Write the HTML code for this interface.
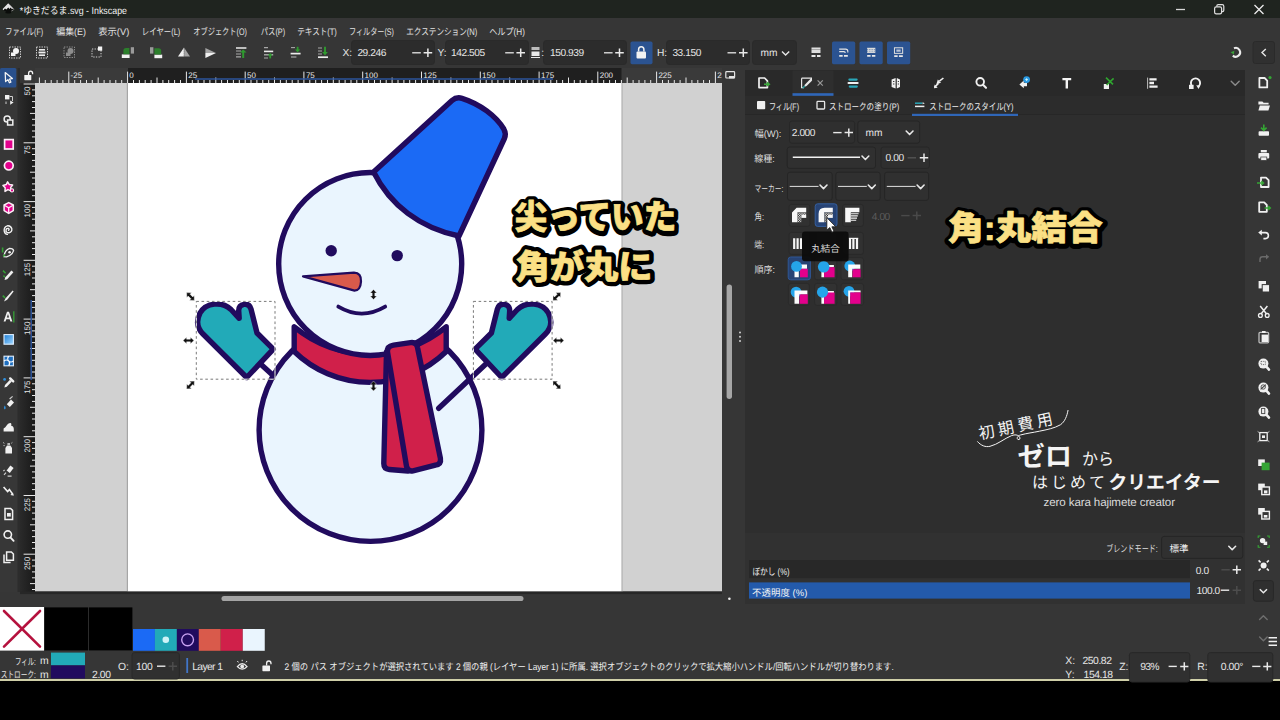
<!DOCTYPE html>
<html lang="ja"><head><meta charset="utf-8"><title>*ゆきだるま.svg - Inkscape</title>
<style>
*{box-sizing:border-box;margin:0;padding:0}
html,body{width:1280px;height:720px;overflow:hidden;background:#000}
body{text-rendering:geometricPrecision;-webkit-font-smoothing:antialiased;font-family:"Liberation Sans",sans-serif;color:#e4e4e4;font-size:10px}
#app{position:relative;width:1280px;height:720px;overflow:hidden;background:#363636}
.ov{position:absolute;left:0;top:0;pointer-events:none;overflow:hidden}
.a{position:absolute}
.t{position:absolute;z-index:4;white-space:nowrap;line-height:1;color:#e6e6e6}
.fld{position:absolute;background:#2c2c2c;border-radius:3px;box-shadow:0 0 0 1px #2a2a2a}
svg text{font-family:"Liberation Sans","Noto Sans CJK JP",sans-serif;white-space:pre}

</style></head>
<body>
<div id="app">
<div class="a" style="left:0;top:0;width:1280px;height:17.5px;background:#1f241f"></div>
<div class="a" style="left:745px;top:70px;width:500px;height:534px;background:#2e2e2e"></div>
<div class="a" style="left:745px;top:70px;width:500px;height:26px;background:#292929"></div>
<div class="a" style="left:745px;top:533px;width:500px;height:71px;background:#313131"></div>
<div class="a" style="left:745px;top:96px;width:500px;height:19px;background:#2c2c2c;border-bottom:1px solid #272727"></div>
<div class="a" style="left:0;top:680px;width:1280px;height:40px;background:#000"></div>
<div class="a" style="left:0;top:679.4px;width:1280px;height:1.8px;background:#cfcfa8"></div>
<svg class="ov" style="z-index:1" width="1280" height="720" viewBox="0 0 1280 720" ><rect x="35" y="83" width="687" height="508.5" fill="#d1d1d1"/><rect x="621" y="83" width="2" height="508.5" fill="#bdbdbd"/><rect x="126.8" y="83" width="1.3" height="508.5" fill="#a6a6a6"/><rect x="128" y="83" width="493.3" height="508.5" fill="#ffffff"/><clipPath id="cv"><rect x="35" y="83" width="687" height="508.5"/></clipPath><g clip-path="url(#cv)"><path d="M260 363.5L300 400" stroke="#210b5e" stroke-width="5.4" stroke-linejoin="round" stroke-linecap="round" fill="none"/><circle cx="370.5" cy="430" r="111.4" fill="#eaf5fe" stroke="#210b5e" stroke-width="5.4" stroke-linejoin="round" stroke-linecap="round"/><path d="M294.2 326.8L294.2 351.5A109 109 0 0 0 446.2 351.5L446.2 326.8A120.2 120.2 0 0 1 294.2 326.8Z" fill="#d0204a" stroke="#210b5e" stroke-width="5.4" stroke-linejoin="round" stroke-linecap="round"/><circle cx="370.2" cy="264" r="91.5" fill="#eaf5fe" stroke="#210b5e" stroke-width="5.4" stroke-linejoin="round" stroke-linecap="round"/><path d="M373.6 172L452 100.5Q456.5 96.6 462 98.3C480 104 496 116 503.8 129Q506.4 133.6 504.4 138.5L459 236C420 228 390 205 373.6 172Z" fill="#1b6af5" stroke="#210b5e" stroke-width="5.4" stroke-linejoin="round" stroke-linecap="round"/><circle cx="331.2" cy="250.8" r="5.7" fill="#210b5e"/><circle cx="397.2" cy="255.6" r="5.7" fill="#210b5e"/><path d="M303 276.4L354 272.6Q361.5 273 361 281.5Q360.5 290.5 354.5 290.6Z" fill="#d95a4b" stroke="#210b5e" stroke-width="2.2" stroke-linejoin="round"/><path d="M338.3 306.6Q361.7 320.5 385.2 306.6" fill="none" stroke="#210b5e" stroke-width="3.8" stroke-linecap="round"/><path d="M386.5 352L383.8 463.5Q383.8 469 389.3 469.5L408 471L404 352Z" fill="#d0204a" stroke="#210b5e" stroke-width="5.4" stroke-linejoin="round" stroke-linecap="round"/><path d="M393.5 345.2L410.5 342.6Q416.5 341.8 417.5 347.5L440.4 458.2Q441.4 464.2 435.4 465.2L413 470.8Q407.5 471.8 406.5 466.3L387.5 352Q386.8 346.3 393.5 345.2Z" fill="#d0204a" stroke="#210b5e" stroke-width="5.4" stroke-linejoin="round" stroke-linecap="round"/><path d="M438.7 408.3L488 362" stroke="#210b5e" stroke-width="5.4" stroke-linejoin="round" stroke-linecap="round" fill="none"/><path d="M246.7 377.5L273.3 349.2L257 333L251 309Q249.5 303.5 244 304.4Q238.8 305.2 238.7 310.5L239.2 318.3L231 309.5C222 301 206 302.5 200 313C196 321 197 328 203 334Z" fill="#22aab8" stroke="#210b5e" stroke-width="5.4" stroke-linejoin="round" stroke-linecap="round"/><g transform="translate(748.4 0) scale(-1 1)"><path d="M246.7 377.5L273.3 349.2L257 333L251 309Q249.5 303.5 244 304.4Q238.8 305.2 238.7 310.5L239.2 318.3L231 309.5C222 301 206 302.5 200 313C196 321 197 328 203 334Z" fill="#22aab8" stroke="#210b5e" stroke-width="5.4" stroke-linejoin="round" stroke-linecap="round"/></g><rect x="196.3" y="301.4" width="78.7" height="77.8" fill="none" stroke="#ffffff" stroke-width="1"/><rect x="196.3" y="301.4" width="78.7" height="77.8" fill="none" stroke="#6a6a6a" stroke-width="0.9" stroke-dasharray="2.6 2.6"/><rect x="473.4" y="301.4" width="78.7" height="77.8" fill="none" stroke="#ffffff" stroke-width="1"/><rect x="473.4" y="301.4" width="78.7" height="77.8" fill="none" stroke="#6a6a6a" stroke-width="0.9" stroke-dasharray="2.6 2.6"/><g transform="translate(190.5 296.5) rotate(45)"><path d="M-5.5 0L-1.9 -3.3V-1.3H1.9V-3.3L5.5 0L1.9 3.3V1.3H-1.9V3.3Z" fill="#111" stroke="#fff" stroke-width="0.4"/></g><g transform="translate(556.8 296.5) rotate(-45)"><path d="M-5.5 0L-1.9 -3.3V-1.3H1.9V-3.3L5.5 0L1.9 3.3V1.3H-1.9V3.3Z" fill="#111" stroke="#fff" stroke-width="0.4"/></g><g transform="translate(190.5 385) rotate(-45)"><path d="M-5.5 0L-1.9 -3.3V-1.3H1.9V-3.3L5.5 0L1.9 3.3V1.3H-1.9V3.3Z" fill="#111" stroke="#fff" stroke-width="0.4"/></g><g transform="translate(556.8 385) rotate(45)"><path d="M-5.5 0L-1.9 -3.3V-1.3H1.9V-3.3L5.5 0L1.9 3.3V1.3H-1.9V3.3Z" fill="#111" stroke="#fff" stroke-width="0.4"/></g><g transform="translate(188.5 340.5) rotate(0)"><path d="M-5.5 0L-1.9 -3.3V-1.3H1.9V-3.3L5.5 0L1.9 3.3V1.3H-1.9V3.3Z" fill="#111" stroke="#fff" stroke-width="0.4"/></g><g transform="translate(558.5 340.5) rotate(0)"><path d="M-5.5 0L-1.9 -3.3V-1.3H1.9V-3.3L5.5 0L1.9 3.3V1.3H-1.9V3.3Z" fill="#111" stroke="#fff" stroke-width="0.4"/></g><g transform="translate(373.5 294.5) rotate(90)"><path d="M-5.0 0L-1.4 -3.3V-1.3H1.4V-3.3L5.0 0L1.4 3.3V1.3H-1.4V3.3Z" fill="#111" stroke="#fff" stroke-width="0.4"/></g><g transform="translate(373.5 386) rotate(90)"><path d="M-5.0 0L-1.4 -3.3V-1.3H1.4V-3.3L5.0 0L1.4 3.3V1.3H-1.4V3.3Z" fill="#111" stroke="#fff" stroke-width="0.4"/></g></g><rect x="20" y="68" width="702" height="15" fill="#3a3a3a"/><rect x="128" y="68" width="493.5" height="15" fill="#1f1f1f"/><path d="M39.4 77.5V83M45.3 80V83M51.2 80V83M57.1 80V83M62.9 80V83M68.8 71.6V83M74.7 80V83M80.6 80V83M86.5 80V83M92.3 80V83M98.2 77.5V83M104.1 80V83M110.0 80V83M115.8 80V83M121.7 80V83M127.6 71.6V83M133.5 80V83M139.4 80V83M145.2 80V83M151.1 80V83M157.0 77.5V83M162.9 80V83M168.7 80V83M174.6 80V83M180.5 80V83M186.4 71.6V83M192.3 80V83M198.1 80V83M204.0 80V83M209.9 80V83M215.8 77.5V83M221.6 80V83M227.5 80V83M233.4 80V83M239.3 80V83M245.2 71.6V83M251.0 80V83M256.9 80V83M262.8 80V83M268.7 80V83M274.5 77.5V83M280.4 80V83M286.3 80V83M292.2 80V83M298.1 80V83M303.9 71.6V83M309.8 80V83M315.7 80V83M321.6 80V83M327.5 80V83M333.3 77.5V83M339.2 80V83M345.1 80V83M351.0 80V83M356.8 80V83M362.7 71.6V83M368.6 80V83M374.5 80V83M380.4 80V83M386.2 80V83M392.1 77.5V83M398.0 80V83M403.9 80V83M409.7 80V83M415.6 80V83M421.5 71.6V83M427.4 80V83M433.3 80V83M439.1 80V83M445.0 80V83M450.9 77.5V83M456.8 80V83M462.6 80V83M468.5 80V83M474.4 80V83M480.3 71.6V83M486.2 80V83M492.0 80V83M497.9 80V83M503.8 80V83M509.7 77.5V83M515.5 80V83M521.4 80V83M527.3 80V83M533.2 80V83M539.1 71.6V83M544.9 80V83M550.8 80V83M556.7 80V83M562.6 80V83M568.5 77.5V83M574.3 80V83M580.2 80V83M586.1 80V83M592.0 80V83M597.8 71.6V83M603.7 80V83M609.6 80V83M615.5 80V83M621.4 80V83M627.2 77.5V83M633.1 80V83M639.0 80V83M644.9 80V83M650.7 80V83M656.6 71.6V83M662.5 80V83M668.4 80V83M674.3 80V83M680.1 80V83M686.0 77.5V83M691.9 80V83M697.8 80V83M703.6 80V83M709.5 80V83M715.4 71.6V83" stroke="#e8e8e8" stroke-width="1" fill="none"/><path d="M195 79H553" stroke="#2c549c" stroke-width="1.5" fill="none"/><defs><linearGradient id="rv" x1="0" x2="1" y1="0" y2="0"><stop offset="0" stop-color="#2a2a2a"/><stop offset="1" stop-color="#191919"/></linearGradient></defs><rect x="20" y="83" width="15" height="509" fill="url(#rv)"/><path d="M23.6 84.0H35M32 89.9H35M32 95.8H35M32 101.6H35M32 107.5H35M30 113.4H35M32 119.3H35M32 125.1H35M32 131.0H35M32 136.9H35M23.6 142.8H35M32 148.7H35M32 154.5H35M32 160.4H35M32 166.3H35M30 172.2H35M32 178.0H35M32 183.9H35M32 189.8H35M32 195.7H35M23.6 201.6H35M32 207.4H35M32 213.3H35M32 219.2H35M32 225.1H35M30 230.9H35M32 236.8H35M32 242.7H35M32 248.6H35M32 254.5H35M23.6 260.3H35M32 266.2H35M32 272.1H35M32 278.0H35M32 283.9H35M30 289.7H35M32 295.6H35M32 301.5H35M32 307.4H35M32 313.2H35M23.6 319.1H35M32 325.0H35M32 330.9H35M32 336.8H35M32 342.6H35M30 348.5H35M32 354.4H35M32 360.3H35M32 366.1H35M32 372.0H35M23.6 377.9H35M32 383.8H35M32 389.7H35M32 395.5H35M32 401.4H35M30 407.3H35M32 413.2H35M32 419.0H35M32 424.9H35M32 430.8H35M23.6 436.7H35M32 442.6H35M32 448.4H35M32 454.3H35M32 460.2H35M30 466.1H35M32 471.9H35M32 477.8H35M32 483.7H35M32 489.6H35M23.6 495.5H35M32 501.3H35M32 507.2H35M32 513.1H35M32 519.0H35M30 524.8H35M32 530.7H35M32 536.6H35M32 542.5H35M32 548.4H35M23.6 554.2H35M32 560.1H35M32 566.0H35M32 571.9H35M32 577.8H35M30 583.6H35M32 589.5H35" stroke="#e8e8e8" stroke-width="1" fill="none"/><path d="M31.2 300V380" stroke="#2c549c" stroke-width="1.5" fill="none"/></svg>
<div class="fld" style="left:352px;top:41px;width:82px;height:23px"></div>
<div class="fld" style="left:445.5px;top:41px;width:82px;height:23px"></div>
<div class="fld" style="left:543.5px;top:41px;width:82.5px;height:23px"></div>
<div class="fld" style="left:667px;top:41px;width:82px;height:23px"></div>
<div class="fld" style="left:752.5px;top:41px;width:43.5px;height:23px"></div>
<span class="t" style="left:342.5px;top:48.9px;font-size:10.2px;color:#e6e6e6;letter-spacing:0px;">X:</span>
<span class="t" style="left:357.4px;top:48.9px;font-size:10.2px;color:#e6e6e6;letter-spacing:-0.45px;">29.246</span>
<span class="t" style="left:437.5px;top:48.9px;font-size:10.2px;color:#e6e6e6;letter-spacing:0px;">Y:</span>
<span class="t" style="left:451px;top:48.9px;font-size:10.2px;color:#e6e6e6;letter-spacing:-0.45px;">142.505</span>
<span class="t" style="left:541.2px;top:48.9px;font-size:10.2px;color:#e6e6e6;letter-spacing:0px;">:</span>
<span class="t" style="left:550px;top:48.9px;font-size:10.2px;color:#e6e6e6;letter-spacing:-0.45px;">150.939</span>
<span class="t" style="left:657px;top:48.9px;font-size:10.2px;color:#e6e6e6;letter-spacing:0px;">H:</span>
<span class="t" style="left:672.4px;top:48.9px;font-size:10.2px;color:#e6e6e6;letter-spacing:-0.45px;">33.150</span>
<span class="t" style="left:760.6px;top:48.9px;font-size:10.2px;color:#e6e6e6;letter-spacing:-0.2px;">mm</span><svg class="ov" style="z-index:3" width="1280" height="720" viewBox="0 0 1280 720" ><path d="M8.2 3.2L2.8 8.8Q2.2 9.8 3.6 10.4L5.4 11Q6.4 11.5 5.5 12.2Q4.8 13 6.2 13.3Q8.2 13.8 10.4 13.3Q11.8 13 11 12.2Q10.2 11.5 11.2 11L13 10.4Q14.2 9.8 13.6 8.8Z" fill="#0b0d0b"/><path d="M8.2 3.2L2.8 8.8Q2.4 9.6 3.4 10.2L5 8.4L6.4 9.4L8.2 7.6L9.6 9L10.6 7.6L12 9.2L13.2 8.4Z" fill="#e4e4e4"/><path d="M9.4 4.4L13.6 8.8Q14 9.6 13.2 10.2L11.4 10.9" fill="none" stroke="#8a8a8a" stroke-width="0.9"/><text x="19.7" y="14.1" font-size="10" fill="#f2f2f2" textLength="107.3" lengthAdjust="spacingAndGlyphs">*ゆきだるま.svg - Inkscape</text><path d="M1176 9.5H1185" stroke="#d8d8d8" stroke-width="1.3"/><rect x="1214.6" y="6.8" width="7" height="7" rx="1.6" fill="none" stroke="#e0e0e0" stroke-width="1.2"/><path d="M1216.8 6.6V6Q1216.8 4.6 1218.2 4.6H1222.2Q1223.8 4.6 1223.8 6.2V10.2Q1223.8 11.6 1222.4 11.6H1221.8" fill="none" stroke="#e0e0e0" stroke-width="1.2"/><path d="M1254.5 5L1263.5 14M1263.5 5L1254.5 14" stroke="#ececec" stroke-width="1.3"/><text x="5.2" y="34.7" font-size="9.5" fill="#e2e2e2" textLength="38" lengthAdjust="spacingAndGlyphs">ファイル(F)</text><text x="56.2" y="34.7" font-size="9.5" fill="#e2e2e2" textLength="29.8" lengthAdjust="spacingAndGlyphs">編集(E)</text><text x="98.2" y="34.7" font-size="9.5" fill="#e2e2e2" textLength="31.1" lengthAdjust="spacingAndGlyphs">表示(V)</text><text x="141.8" y="34.7" font-size="9.5" fill="#e2e2e2" textLength="38.5" lengthAdjust="spacingAndGlyphs">レイヤー(L)</text><text x="193.3" y="34.7" font-size="9.5" fill="#e2e2e2" textLength="53.6" lengthAdjust="spacingAndGlyphs">オブジェクト(O)</text><text x="260.7" y="34.7" font-size="9.5" fill="#e2e2e2" textLength="24.5" lengthAdjust="spacingAndGlyphs">パス(P)</text><text x="297.3" y="34.7" font-size="9.5" fill="#e2e2e2" textLength="39.6" lengthAdjust="spacingAndGlyphs">テキスト(T)</text><text x="348.9" y="34.7" font-size="9.5" fill="#e2e2e2" textLength="45.1" lengthAdjust="spacingAndGlyphs">フィルター(S)</text><text x="406.2" y="34.7" font-size="9.5" fill="#e2e2e2" textLength="71.2" lengthAdjust="spacingAndGlyphs">エクステンション(N)</text><text x="489.2" y="34.7" font-size="9.5" fill="#e2e2e2" textLength="35.7" lengthAdjust="spacingAndGlyphs">ヘルプ(H)</text><rect x="9.5" y="47" width="11" height="11" fill="none" stroke="#d0d0d0" stroke-width="1" stroke-dasharray="1.4 1.1" opacity="1.0"/><circle cx="16" cy="51" r="3" fill="#f4f4f4"/><rect x="11" y="52.5" width="4.5" height="3.5" fill="#f4f4f4"/><rect x="36.5" y="47" width="11" height="11" fill="none" stroke="#d0d0d0" stroke-width="1" stroke-dasharray="1.4 1.1" opacity="1.0"/><rect x="39" y="49" width="6" height="1.6" fill="#eee"/><rect x="38.5" y="51.6" width="7" height="1.8" fill="#eee"/><rect x="39" y="54.4" width="6" height="1.6" fill="#eee"/><rect x="64" y="47" width="10.5" height="10.5" fill="none" stroke="#d0d0d0" stroke-width="1" stroke-dasharray="1.4 1.1" opacity="0.55"/><circle cx="70.5" cy="51" r="3" fill="#8d8d8d"/><rect x="66" y="52.5" width="4.5" height="3.5" fill="#8d8d8d"/><rect x="92" y="49" width="9" height="8" fill="none" stroke="#cfcfcf" stroke-width="1" stroke-dasharray="1.3 1.3"/><rect x="98" y="46.5" width="4.2" height="4.2" fill="#f4f4f4"/><rect x="121.8" y="54.4" width="7.8" height="3.6" fill="#f2f2f2"/><rect x="130.8" y="47.2" width="3.2" height="6.4" fill="#9a9a9a"/><path d="M123.4 54.2V50.6Q123.4 48 126 48H129.4V54.2Z" fill="#2c7f2c"/><rect x="154.4" y="54.6" width="7.8" height="3.6" fill="#f2f2f2"/><rect x="150" y="47.2" width="3.4" height="6.4" fill="#9a9a9a"/><path d="M161.2 54.4V50.8Q161.2 48.2 158.6 48.2H154.4V54.4Z" fill="#2c7f2c"/><path d="M184 47.4V56.6H178Z" fill="#f0f0f0"/><path d="M184 47.4V56.6H190Z" fill="#a4a4a4"/><path d="M184 47.4V56.6" stroke="#444" stroke-width="0.7" stroke-dasharray="1 1"/><path d="M205.4 53H216L205.4 48Z" fill="#a4a4a4"/><path d="M205.4 53H216L205.4 58Z" fill="#f0f0f0"/><path d="M236 48H246.4" stroke="#ececec" stroke-width="1.5"/><path d="M236 51H241M236 54H241M236 56.8H241" stroke="#a8a8a8" stroke-width="1.2"/><path d="M243.2 58V51.6" stroke="#2f9a2f" stroke-width="2"/><path d="M239.8 52.6L243.2 49.4L246.6 52.6Z" fill="#2f9a2f"/><path d="M264 47.6H268M264 58H268" stroke="#a8a8a8" stroke-width="1.1"/><path d="M264 51.4H273.2" stroke="#ececec" stroke-width="1.6"/><path d="M264 54.8H273.2" stroke="#b4b4b4" stroke-width="1.3"/><path d="M270.2 58.4V55" stroke="#2f9a2f" stroke-width="1.8"/><path d="M267.8 55.6L270.2 53L272.6 55.6Z" fill="#2f9a2f"/><path d="M290.6 53.6H300.6" stroke="#ececec" stroke-width="1.7"/><path d="M291 57H296.4" stroke="#a8a8a8" stroke-width="1.2"/><path d="M291 47.6H295" stroke="#a8a8a8" stroke-width="1.1"/><path d="M297.6 46.8V50" stroke="#2f9a2f" stroke-width="1.8"/><path d="M295 49.6L297.6 52.4L300.2 49.6Z" fill="#2f9a2f"/><path d="M318 57.2H328" stroke="#ececec" stroke-width="1.7"/><path d="M318 48H322M318 51H322M318 54H322" stroke="#a8a8a8" stroke-width="1.1"/><path d="M325 46.8V52.6" stroke="#2f9a2f" stroke-width="1.9"/><path d="M322.2 52L325 55.4L327.8 52Z" fill="#2f9a2f"/><rect x="531.5" y="47" width="8" height="3" fill="#bdbdbd"/><rect x="531.5" y="51.5" width="8" height="4.5" fill="#e8e8e8"/><path d="M531 57.5H540" stroke="#e8e8e8" stroke-width="1"/><rect x="630.5" y="41.6" width="22" height="22.6" rx="1.6" fill="#2b5391"/><rect x="636.5" y="51.5" width="9.5" height="7" rx="1" fill="#f2f2f2"/><path d="M638.6 51.5V49.6Q638.6 46.8 641.2 46.8Q643.9 46.8 643.9 49.6V51.5" fill="none" stroke="#f2f2f2" stroke-width="1.5"/><rect x="811.5" y="47.5" width="9" height="5.5" fill="#dedede"/><path d="M811.5 49.5H820.5" stroke="#555" stroke-width="0.8" stroke-dasharray="1 1"/><path d="M811.5 56H815.5M817 56H820.5" stroke="#e8e8e8" stroke-width="2"/><rect x="832" y="41.6" width="23.2" height="22.6" rx="1.6" fill="#2b5391"/><rect x="859.5" y="41.6" width="23.2" height="22.6" rx="1.6" fill="#2b5391"/><rect x="887" y="41.6" width="23.2" height="22.6" rx="1.6" fill="#2b5391"/><g transform="translate(843.6 52.6) scale(0.86) translate(-843.6 -52.6)"><path d="M838.5 48.5H846Q848.5 48.5 848.5 51V52.5M838.5 51.5H844Q845.5 51.5 845.5 53" fill="none" stroke="#e6e6e6" stroke-width="1.3"/><path d="M838.5 56.5H842.5M844 56.5H848.5" stroke="#e8e8e8" stroke-width="2"/></g><g transform="translate(871.2 52.6) scale(0.86) translate(-871.2 -52.6)"><rect x="866.5" y="47" width="9.5" height="6" fill="#dcdcdc"/><path d="M866.5 49H876M866.5 51H876" stroke="#2c5896" stroke-width="0.7" stroke-dasharray="1 1"/><path d="M866.5 56.5H870.5M872 56.5H876" stroke="#e8e8e8" stroke-width="2"/></g><g transform="translate(898.6 52.6) scale(0.86) translate(-898.6 -52.6)"><rect x="893.8" y="47" width="9.5" height="6.5" fill="none" stroke="#dcdcdc" stroke-width="1.2"/><rect x="896" y="49" width="5" height="2.6" fill="#b8c4d8"/><path d="M893.5 56.8H897.5M899 56.8H903.5" stroke="#e8e8e8" stroke-width="2"/></g><path d="M1234 48.2A4.4 4.4 0 1 1 1232.8 55.6" fill="none" stroke="#ececec" stroke-width="2.1"/><path d="M1230.6 52.2L1234.4 50.8L1233.8 54.4Z" fill="#3aa03a"/><rect x="1253" y="41.5" width="21.5" height="22" rx="2.5" fill="#303030" stroke="#2a2a2a" stroke-width="1"/><path d="M1265.8 49L1262 52.6L1265.8 56.2" fill="none" stroke="#e6e6e6" stroke-width="1.4"/><path d="M782 51.4L785.6 55L789.2 51.4" fill="none" stroke="#e6e6e6" stroke-width="1.4"/><path d="M412.2 52.8H420.8" stroke="#e9e9e9" stroke-width="1.3"/><path d="M423.6 52.8H432.20000000000005M427.90000000000003 48.5V57.099999999999994" stroke="#e9e9e9" stroke-width="1.5"/><path d="M505.2 52.8H513.8" stroke="#e9e9e9" stroke-width="1.3"/><path d="M516.4 52.8H525.0M520.6999999999999 48.5V57.099999999999994" stroke="#e9e9e9" stroke-width="1.5"/><path d="M604 52.8H612.6" stroke="#e9e9e9" stroke-width="1.3"/><path d="M615.2 52.8H623.8000000000001M619.5 48.5V57.099999999999994" stroke="#e9e9e9" stroke-width="1.5"/><path d="M727.5 52.8H736.1" stroke="#e9e9e9" stroke-width="1.3"/><path d="M739 52.8H747.6M743.3 48.5V57.099999999999994" stroke="#e9e9e9" stroke-width="1.5"/></svg>
<svg class="ov" style="z-index:2" width="1280" height="720" viewBox="0 0 1280 720" ><rect x="0" y="68" width="17.5" height="524" fill="#373737"/><rect x="17.5" y="68" width="2.5" height="524" fill="#2c2c2c"/><rect x="20" y="68" width="15" height="15" fill="#363636"/><rect x="0" y="68" width="16.3" height="19.5" rx="1.5" fill="#29508c"/><path d="M5.2 72.6L5.6 81.6L7.9 79.6L9.4 82.8L10.9 82.1L9.5 79L12.4 78.6Z" fill="#29508c" stroke="#f4f4f4" stroke-width="1.25" stroke-linejoin="round"/><rect x="24.3" y="75" width="7" height="5.2" rx="0.6" fill="#f4f4f4"/><path d="M28.6 75V73.4Q28.6 71.2 30.6 71.2Q32.6 71.2 32.6 73.4V74.2" fill="none" stroke="#f4f4f4" stroke-width="1.3"/><rect x="5" y="95" width="4.4" height="4.4" fill="#f0f0f0"/><path d="M6 101.5V104M9.5 96.5H12.5V101" stroke="#cfcfcf" stroke-width="1" fill="none"/><path d="M10.2 100.5L13.6 102.6L10.2 104.8Z" fill="#f0f0f0"/><circle cx="7.2" cy="119" r="3.1" fill="none" stroke="#f0f0f0" stroke-width="1.5"/><rect x="7.6" y="120" width="5.2" height="5" fill="#363636" stroke="#f0f0f0" stroke-width="1.5"/><rect x="4.6" y="139.6" width="8.6" height="9.4" fill="#e3008c" stroke="#fbeef6" stroke-width="1.7"/><circle cx="8.8" cy="165.6" r="4.4" fill="#e3008c" stroke="#fbeef6" stroke-width="1.7"/><path d="M7.6 181.8L9.3 184.6L12.6 185L10.6 187.6L11.4 191L7.9 189.6L5 191.4L5.2 187.8L3 185.4L6.2 184.6Z" fill="#e3008c" stroke="#fbeef6" stroke-width="1.5" stroke-linejoin="round"/><circle cx="12" cy="190.4" r="1.6" fill="#e3008c" stroke="#fbeef6" stroke-width="1.1"/><path d="M8.7 202.6L13.3 205V210.6L8.7 213.4L4.1 210.6V205Z" fill="#e3008c" stroke="#fbeef6" stroke-width="1.5" stroke-linejoin="round"/><path d="M4.3 205.2L8.7 207.8L13.1 205.2M8.7 207.8V213" fill="none" stroke="#fbeef6" stroke-width="1.3"/><path d="M8.6 230.2Q9.6 229.2 8.4 228.4Q6.4 228 6 230.2Q6 233 9 232.8Q12.2 232 11.8 228.8Q10.8 225.4 7.4 225.8Q3.8 226.8 4.2 230.8Q4.8 234 7.4 234.4" fill="none" stroke="#f0f0f0" stroke-width="1.4" stroke-linecap="round"/><path d="M4 256.6Q4.6 250 9.6 248.4Q13.4 248.6 13.6 250.6Q12.4 255 6.6 256.8Z" fill="none" stroke="#f0f0f0" stroke-width="1.3"/><circle cx="9.6" cy="252.2" r="1.3" fill="#f0f0f0"/><path d="M2.6 247.6V252.4M3.2 256.4L5 254.6" stroke="#35a035" stroke-width="1.6"/><path d="M5.2 277.6L11.4 270.4L13.4 272.2L7.2 279.2L4.6 280Z" fill="#f0f0f0"/><path d="M3 270.6L5.6 273.2M3.4 275.6L5 277" stroke="#35a035" stroke-width="1.5"/><path d="M5.4 298.6L12.6 290.4L13.6 291.4L7.2 299.8L4 301.6Z" fill="#f0f0f0"/><path d="M2.8 295.6L5.2 298" stroke="#35a035" stroke-width="1.6"/><path d="M3.6 321.6L7 311.8H9L12.4 321.6H10.4L9.6 319.2H6.3L5.5 321.6ZM6.8 317.6H9.1L8 314Z" fill="#f0f0f0"/><path d="M13.8 311.2V322.4" stroke="#35a035" stroke-width="1.3"/><defs><linearGradient id="gg" x1="0" y1="0" x2="1" y2="1"><stop offset="0" stop-color="#1e7fd6"/><stop offset="1" stop-color="#9fd6ff"/></linearGradient></defs><rect x="4" y="334.6" width="9.4" height="9.6" fill="url(#gg)" stroke="#dfefff" stroke-width="1.1"/><rect x="4" y="356.2" width="9.4" height="9.6" fill="#1e6fc0" stroke="#dfefff" stroke-width="1.1"/><path d="M4 361Q6.4 359 8.7 361T13.4 361M8.7 356.2Q6.8 358.6 8.7 361T8.7 365.8" fill="none" stroke="#fff" stroke-width="1.1"/><path d="M4.4 387.4L5 385L10 379.8L11.8 381.6L6.8 386.8Z" fill="#f0f0f0"/><path d="M10.2 378.4L13.2 381.4" stroke="#f0f0f0" stroke-width="2.4" stroke-linecap="round"/><circle cx="4.6" cy="379.4" r="1.4" fill="#2f8fdc"/><path d="M6.8 404.2L11 399.6L14 402.4L9.8 407Z" fill="#f0f0f0"/><path d="M4.8 405.4Q3 408.2 4.8 409.4Q6.6 408.2 4.8 405.4Z" fill="#2f8fdc"/><path d="M9.6 399L12.6 396.4" stroke="#cfcfcf" stroke-width="1.2"/><path d="M3.6 431.6V428.4Q5.6 427.8 6.6 425.6Q8 422.6 10.6 423Q12.2 423.8 11 425.6Q13.8 426.2 13.8 429V431.6Z" fill="#f0f0f0"/><path d="M5.4 453.6V448L7 445.6H10.4L12 448V453.6Z" fill="#f0f0f0"/><rect x="7.4" y="443" width="2.6" height="2" fill="#bdbdbd"/><path d="M3 442.4L4.4 443.4M3.4 445.6H4.8M12.4 442.4L11.2 443.4" stroke="#bdbdbd" stroke-width="0.9"/><path d="M6.6 470.6L10.4 465.6L13.6 468L9.8 473Z" fill="#f0f0f0"/><path d="M4 474.8L6 472.6M7.6 476.2H11.6M3.4 471L4.6 470" stroke="#cfcfcf" stroke-width="1.2"/><path d="M3.6 487L7.6 491.6L9.4 489.6L13 494.6" fill="none" stroke="#f0f0f0" stroke-width="1.6"/><path d="M13.8 495.8L10.4 495L12.8 492.4Z" fill="#f0f0f0"/><path d="M5 508.4H10.6L12.6 510.4V519.4H5Z" fill="none" stroke="#f0f0f0" stroke-width="1.5"/><rect x="7" y="513" width="3.8" height="3.6" fill="#f0f0f0"/><circle cx="7.8" cy="534.6" r="3.7" fill="none" stroke="#f0f0f0" stroke-width="1.6"/><path d="M10.6 537.6L13.6 540.8" stroke="#f0f0f0" stroke-width="1.9" stroke-linecap="round"/><path d="M4 554.4V562.6H10.6" fill="none" stroke="#f0f0f0" stroke-width="1.5"/><path d="M6.6 552H11.4L13.4 554V560.2H6.6Z" fill="#363636" stroke="#f0f0f0" stroke-width="1.5"/><g font-size="8" fill="#e6e6e6"><text x="70.6" y="78">-25</text><text x="129.3" y="78">0</text><text x="188.2" y="78">25</text><text x="247" y="78">50</text><text x="305.9" y="78">75</text><text x="364.6" y="78">100</text><text x="423.3" y="78">125</text><text x="482.1" y="78">150</text><text x="540.9" y="78">175</text><text x="599.7" y="78">200</text><text x="658.4" y="78">225</text><text x="717.2" y="78">250</text></g><text font-size="8" fill="#e6e6e6" transform="translate(30.4 95.4) rotate(-90)">50</text><text font-size="8" fill="#e6e6e6" transform="translate(30.4 154.2) rotate(-90)">75</text><text font-size="8" fill="#e6e6e6" transform="translate(30.4 217.4) rotate(-90)">100</text><text font-size="8" fill="#e6e6e6" transform="translate(30.4 276.2) rotate(-90)">125</text><text font-size="8" fill="#e6e6e6" transform="translate(30.4 335.0) rotate(-90)">150</text><text font-size="8" fill="#e6e6e6" transform="translate(30.4 393.8) rotate(-90)">175</text><text font-size="8" fill="#e6e6e6" transform="translate(30.4 452.5) rotate(-90)">200</text><text font-size="8" fill="#e6e6e6" transform="translate(30.4 511.3) rotate(-90)">225</text><text font-size="8" fill="#e6e6e6" transform="translate(30.4 570.1) rotate(-90)">250</text><rect x="722" y="68" width="23" height="15" fill="#363636"/><rect x="725.8" y="71.6" width="8.8" height="6.4" rx="0.8" fill="none" stroke="#e4e4e4" stroke-width="1.2"/><rect x="729" y="76" width="5.6" height="2.4" fill="#e4e4e4"/></svg>
<svg class="ov" style="z-index:3" width="1280" height="720" viewBox="0 0 1280 720" ><rect x="792.5" y="70.5" width="41" height="26" fill="#2e2e2e"/><rect x="792.5" y="93.2" width="41" height="2.6" fill="#2f66b8"/><path d="M759 78H764.6L767.4 80.8V87.6H759Z" fill="none" stroke="#f0f0f0" stroke-width="1.7" stroke-linejoin="round"/><path d="M764 84.2H768.4M767 82.4L769.4 84.2L767 86" fill="none" stroke="#3aa83a" stroke-width="1.4"/><path d="M801.6 78.2H811.4V80M801.6 78.2V87.6H804" fill="none" stroke="#e8e8e8" stroke-width="1.2"/><path d="M803.6 87.2L805 84.4L810.6 78.8L812.2 80.4L806.6 86Z" fill="#e8e8e8"/><path d="M802.6 88.2L804.8 86" stroke="#2aa0a0" stroke-width="1.4"/><path d="M817.6 80.4L822.8 85.6M822.8 80.4L817.6 85.6" stroke="#9a9a9a" stroke-width="1.2"/><path d="M849.4 79.6H856.6" stroke="#2aa6b8" stroke-width="2.2" stroke-linecap="round"/><path d="M848.6 83H857.6" stroke="#f0f0f0" stroke-width="2.2" stroke-linecap="round"/><path d="M849.8 86.6H856.8" stroke="#2aa6b8" stroke-width="2.2" stroke-linecap="round"/><path d="M891.6 79.6L895.6 78V88.4L891.6 87Z" fill="#f0f0f0"/><path d="M896.8 78L900 79.6V87L896.8 88.4Z" fill="#f0f0f0"/><path d="M893 81.5H894.4M893 84H894.4M897.8 81.5H899M897.8 84H899" stroke="#2b2b2b" stroke-width="0.9"/><path d="M943.4 78L939.4 81.2M938.4 83.4L934.4 87.4" stroke="#f0f0f0" stroke-width="1.6"/><path d="M937.8 79.6L941 82.8L936.4 84.2Z" fill="#f0f0f0"/><path d="M934.6 84.6L937.6 87.8L934 88.2Z" fill="#f0f0f0"/><circle cx="980.2" cy="81.8" r="3.8" fill="none" stroke="#f0f0f0" stroke-width="1.9"/><path d="M983 84.8L986 87.8" stroke="#f0f0f0" stroke-width="2.1" stroke-linecap="round"/><path d="M1019.4 84.4L1023.8 80.6V82.8H1027V86.2H1023.8V88.2Z" fill="#f0f0f0"/><circle cx="1026.6" cy="79.6" r="3.4" fill="#2b9be4"/><path d="M1025.2 79.6H1028M1026.6 78.2V81" stroke="#dff" stroke-width="0.8"/><path d="M1062.4 78H1071.2V80.2H1068V88.4H1065.6V80.2H1062.4Z" fill="#f4f4f4"/><rect x="1103.8" y="84" width="5.2" height="5" fill="#f0f0f0"/><path d="M1106 77.6L1113 84.4M1113.6 78.4L1106.6 85" stroke="#2fa52f" stroke-width="1.6"/><path d="M1147.6 77.6V88.8" stroke="#bdbdbd" stroke-width="1"/><path d="M1149.4 79.4H1156.6M1149.4 83H1154M1149.4 86.6H1157.6" stroke="#f0f0f0" stroke-width="2.4"/><path d="M1192.2 86.2A4.6 4.6 0 1 1 1198.6 86.4" fill="none" stroke="#f0f0f0" stroke-width="1.9"/><path d="M1196.2 85.2L1200.2 85.6L1198.6 89Z" fill="#f0f0f0"/><rect x="1189" y="84.8" width="4.6" height="4.2" fill="#f0f0f0"/><path d="M1231.2 81.2L1235.2 85.2L1239.2 81.2" fill="none" stroke="#8a8a8a" stroke-width="1.4" stroke-linecap="round" stroke-linejoin="round"/><rect x="757" y="101" width="8.2" height="8.2" rx="0.8" fill="#f0f0f0"/><text x="768.9" y="109.9" font-size="9.5" fill="#ececec" textLength="30.1" lengthAdjust="spacingAndGlyphs">フィル(F)</text><rect x="817" y="101.4" width="7.6" height="7.6" rx="0.8" fill="none" stroke="#e6e6e6" stroke-width="1.3"/><text x="829" y="109.9" font-size="9.5" fill="#ececec" textLength="70.2" lengthAdjust="spacingAndGlyphs">ストロークの塗り(P)</text><path d="M915 103.2H922.4" stroke="#2aa6b8" stroke-width="1.5"/><path d="M915 106.4H924.4" stroke="#f0f0f0" stroke-width="1.5"/><path d="M922.6 102.2L924.8 103.2L922.6 104.2Z" fill="#f0f0f0"/><text x="929.2" y="109.9" font-size="9.5" fill="#ececec" textLength="84.3" lengthAdjust="spacingAndGlyphs">ストロークのスタイル(Y)</text><rect x="912" y="113.8" width="106" height="2.2" fill="#2f66b8"/><text x="754.4" y="137.2" font-size="9.5" fill="#dedede" textLength="27" lengthAdjust="spacingAndGlyphs">幅(W):</text><rect x="789.5" y="121" width="65.1" height="22.2" rx="2.5" fill="#2f2f2f" stroke="#272727" stroke-width="1"/><path d="M833.2 132.6H841.6" stroke="#e9e9e9" stroke-width="1.4"/><path d="M844.6 132.6H853.0M848.8000000000001 128.4V136.79999999999998" stroke="#e9e9e9" stroke-width="1.5"/><rect x="857.8" y="121" width="61.9" height="22.2" rx="2.5" fill="#303030" stroke="#252525" stroke-width="1"/><path d="M906.2 131.05L909.6 134.55L913.0 131.05" fill="none" stroke="#e8e8e8" stroke-width="1.6" stroke-linecap="round" stroke-linejoin="round"/><text x="754.2" y="161.9" font-size="9.5" fill="#dedede" textLength="20.5" lengthAdjust="spacingAndGlyphs">線種:</text><rect x="787.2" y="147" width="88.3" height="21.4" rx="2.5" fill="#303030" stroke="#252525" stroke-width="1"/><path d="M792.8 157.2H860" stroke="#f2f2f2" stroke-width="1.6"/><path d="M862.0 156.05L865.4 159.55L868.8 156.05" fill="none" stroke="#e8e8e8" stroke-width="1.6" stroke-linecap="round" stroke-linejoin="round"/><rect x="881" y="147" width="48.4" height="21.4" rx="2.5" fill="#2f2f2f" stroke="#272727" stroke-width="1"/><path d="M907.6 157.8H916.0" stroke="#555" stroke-width="1.4"/><path d="M919.8 157.8H928.1999999999999M924.0 153.60000000000002V162.0" stroke="#e9e9e9" stroke-width="1.5"/><text x="754.4" y="191.5" font-size="9.5" fill="#dedede" textLength="28.9" lengthAdjust="spacingAndGlyphs">マーカー:</text><rect x="787.5" y="172.2" width="44.7" height="28.2" rx="2.5" fill="#303030" stroke="#252525" stroke-width="1"/><path d="M789.7 186.4H818.5" stroke="#e0e0e0" stroke-width="1"/><path d="M820.0 185.0L823.5 188.60000000000002L827.0 185.0" fill="none" stroke="#e8e8e8" stroke-width="1.6" stroke-linecap="round" stroke-linejoin="round"/><rect x="835.8" y="172.2" width="44.4" height="28.2" rx="2.5" fill="#303030" stroke="#252525" stroke-width="1"/><path d="M838.0 186.4H866.8" stroke="#e0e0e0" stroke-width="1"/><path d="M868.3 185.0L871.8 188.60000000000002L875.3 185.0" fill="none" stroke="#e8e8e8" stroke-width="1.6" stroke-linecap="round" stroke-linejoin="round"/><rect x="884.6" y="172.2" width="44.0" height="28.2" rx="2.5" fill="#303030" stroke="#252525" stroke-width="1"/><path d="M886.8000000000001 186.4H915.6" stroke="#e0e0e0" stroke-width="1"/><path d="M917.1 185.0L920.6 188.60000000000002L924.1 185.0" fill="none" stroke="#e8e8e8" stroke-width="1.6" stroke-linecap="round" stroke-linejoin="round"/><text x="754.6" y="219.9" font-size="9.5" fill="#dedede" textLength="9.5" lengthAdjust="spacingAndGlyphs">角:</text><rect x="789" y="204.4" width="21.0" height="22.0" rx="2.5" fill="#313131" stroke="#292929" stroke-width="1"/><rect x="815.2" y="203.8" width="21.8" height="22.6" rx="2.5" fill="#274374" stroke="#355f9f" stroke-width="1"/><rect x="842.6" y="204.4" width="20.8" height="22.0" rx="2.5" fill="#313131" stroke="#292929" stroke-width="1"/><defs><pattern id="ck" width="1.7" height="1.7" patternUnits="userSpaceOnUse"><rect width="1.7" height="1.7" fill="#f4f4f4"/><rect width="0.85" height="0.85" fill="#1c1c1c"/><rect x="0.85" y="0.85" width="0.85" height="0.85" fill="#1c1c1c"/></pattern></defs><path d="M792 222.2V212.5L796.6 207.7H806.2V212.2H797.6V222.2Z" fill="#f8f8f8"/><path d="M797.6 222.2V212.2H806.2V214.89999999999998H801.4V222.2Z" fill="url(#ck)"/><rect x="801.4" y="214.7" width="4.8" height="3.2" fill="#f8f8f8"/><path d="M818.6 222.2V213.7Q818.6 207.7 824.6 207.7H832.8000000000001V212.2H824.2V222.2Z" fill="#f8f8f8"/><path d="M824.2 222.2V212.2H832.8000000000001V214.89999999999998H828.0V222.2Z" fill="url(#ck)"/><rect x="828.0" y="214.7" width="4.8" height="3.2" fill="#f8f8f8"/><path d="M845.2 222.2V207.7H859.4000000000001V212.2H850.8000000000001V222.2Z" fill="#f8f8f8"/><path d="M850.8000000000001 213.7H858.6M850.8000000000001 215.89999999999998H857.8000000000001M850.8000000000001 218.1H857.0M850.8000000000001 220.29999999999998H856.2" stroke="#f4f4f4" stroke-width="1.1"/><path d="M901.2 215.6H909.6" stroke="#4a4a4a" stroke-width="1.4"/><path d="M912.6 215.6H921.0M916.8000000000001 211.4V219.79999999999998" stroke="#4a4a4a" stroke-width="1.5"/><text x="754.3" y="247.5" font-size="9.5" fill="#dedede" textLength="9.8" lengthAdjust="spacingAndGlyphs">端:</text><rect x="789" y="232.4" width="21.0" height="22.0" rx="2.5" fill="#313131" stroke="#292929" stroke-width="1"/><rect x="815.8" y="232.4" width="20.8" height="22.0" rx="2.5" fill="#313131" stroke="#292929" stroke-width="1"/><rect x="842.6" y="232.4" width="20.8" height="22.0" rx="2.5" fill="#313131" stroke="#292929" stroke-width="1"/><path d="M794.2 238.2V249M797.6 238.2V249M801 238.2V249" stroke="#f6f6f6" stroke-width="2.2"/><path d="M850 238.2V249M853.4 238.2V249M857 238.2V249" stroke="#f6f6f6" stroke-width="2.2"/><path d="M848.8 238.4H858.2" stroke="#f6f6f6" stroke-width="1.2"/><text x="754.4" y="272.7" font-size="9.5" fill="#dedede" textLength="20.6" lengthAdjust="spacingAndGlyphs">順序:</text><rect x="788.2" y="257" width="22.2" height="22.8" rx="2.5" fill="#274374" stroke="#2f5796" stroke-width="1"/><rect x="788.4" y="283.4" width="21.0" height="22.0" rx="2.5" fill="#323232" stroke="#2a2a2a" stroke-width="1"/><rect x="814.6" y="257.6" width="22.2" height="22.2" rx="2.5" fill="#323232" stroke="#2a2a2a" stroke-width="1"/><rect x="814.6" y="283.4" width="22.2" height="22.0" rx="2.5" fill="#323232" stroke="#2a2a2a" stroke-width="1"/><rect x="841" y="257.6" width="22.6" height="22.2" rx="2.5" fill="#323232" stroke="#2a2a2a" stroke-width="1"/><rect x="841" y="283.4" width="22.6" height="22.0" rx="2.5" fill="#323232" stroke="#2a2a2a" stroke-width="1"/><path d="M794.5 264.5H807.0V268.8H798.8V277.3H794.5Z" fill="#fbfbfb"/><rect x="800.0" y="268.8" width="7.8" height="8.5" fill="#e3008c"/><circle cx="796.5" cy="266.4" r="5.4" fill="#25a4ea"/><path d="M821.4 264.9H833.9V267.2H824.1V277.3H821.4Z" fill="#fbfbfb"/><rect x="824.1" y="267.2" width="10.5" height="10.1" fill="#e3008c"/><circle cx="823.7" cy="266.8" r="5.8" fill="#25a4ea"/><circle cx="849.8" cy="266.0" r="5.4" fill="#25a4ea"/><path d="M848.2 264.5H860.3V268.8H852.2V277.3H848.2Z" fill="#fbfbfb"/><rect x="852.5" y="269.2" width="8.1" height="8.1" fill="#e3008c"/><circle cx="796.1" cy="292.1" r="5.4" fill="#25a4ea"/><path d="M794.5 290.5H807.4V294.4H799.1V303.8H794.5Z" fill="#fbfbfb"/><rect x="799.6" y="294.4" width="8.2" height="9.4" fill="#e3008c"/><path d="M821.4 290.9H833.9V292.9H824.1V303.8H821.4Z" fill="#fbfbfb"/><rect x="824.1" y="292.5" width="10.5" height="11.3" fill="#e3008c"/><circle cx="822.5" cy="292.1" r="5.6" fill="#25a4ea"/><circle cx="849.0" cy="291.3" r="5.4" fill="#25a4ea"/><path d="M848.2 290.4H860.6V292.4H850.2V303.8H848.2Z" fill="#fbfbfb"/><rect x="850.2" y="292.4" width="10.4" height="11.4" fill="#e3008c"/><text x="1106.2" y="552.4" font-size="9.5" fill="#dedede" textLength="51.6" lengthAdjust="spacingAndGlyphs">ブレンドモード:</text><rect x="1161.6" y="536.4" width="81.2" height="22.0" rx="2.5" fill="#303030" stroke="#252525" stroke-width="1"/><text x="1169.5" y="552.4" font-size="9.5" fill="#ececec" textLength="19.1" lengthAdjust="spacingAndGlyphs">標準</text><path d="M1228.8 546.25L1232.2 549.75L1235.6000000000001 546.25" fill="none" stroke="#e8e8e8" stroke-width="1.6" stroke-linecap="round" stroke-linejoin="round"/><rect x="749" y="560" width="441" height="18.2" fill="#282828"/><text x="752.4" y="574.6" font-size="9.5" fill="#ececec" textLength="37.2" lengthAdjust="spacingAndGlyphs">ぼかし (%)</text><path d="M1221.4 569.8H1229.8000000000002" stroke="#4d4d4d" stroke-width="1.4"/><path d="M1232.6 569.8H1241.0M1236.8 565.5999999999999V574.0" stroke="#e9e9e9" stroke-width="1.5"/><rect x="749" y="582.4" width="441" height="16.2" fill="#235aab"/><text x="752.1" y="595.8" font-size="9.5" fill="#f4f4f4" textLength="55.2" lengthAdjust="spacingAndGlyphs">不透明度 (%)</text><path d="M1220.8 590.2H1229.2" stroke="#e9e9e9" stroke-width="1.4"/><path d="M1232.6 590.2H1241.0M1236.8 586.0V594.4000000000001" stroke="#4d4d4d" stroke-width="1.5"/><rect x="726.6" y="284.4" width="5.4" height="114.6" rx="2.7" fill="#a6a6a6"/><circle cx="729.4" cy="598.8" r="1.3" fill="#f0f0f0"/><circle cx="740" cy="332.6" r="1" fill="#d0d0d0"/><circle cx="740" cy="336.8" r="1" fill="#d0d0d0"/><circle cx="740" cy="341" r="1" fill="#d0d0d0"/></svg><span class="t" style="left:791.8px;top:128.6px;font-size:10.2px;color:#e6e6e6;letter-spacing:-0.45px">2.000</span>
<span class="t" style="left:865.6px;top:128.8px;font-size:10.2px;color:#e6e6e6;letter-spacing:-0.2px">mm</span>
<span class="t" style="left:885.6px;top:153.9px;font-size:10.2px;color:#e6e6e6;letter-spacing:-0.45px">0.00</span>
<span class="t" style="left:871.8px;top:212.6px;font-size:10.2px;color:#5c5c5c;letter-spacing:-0.45px">4.00</span>
<span class="t" style="left:1195.8px;top:566.6px;font-size:10.2px;color:#e6e6e6;letter-spacing:-0.45px">0.0</span>
<span class="t" style="left:1196.6px;top:587px;font-size:10.2px;color:#e6e6e6;letter-spacing:-0.45px">100.0</span>
<svg class="ov" style="z-index:3" width="1280" height="720" viewBox="0 0 1280 720" ><rect x="20" y="591.5" width="702" height="2.6" fill="#272727"/><rect x="221.5" y="595.9" width="302" height="5.2" rx="2.6" fill="#a4a4a4"/><rect x="0" y="607" width="44" height="43.6" fill="#ffffff"/><path d="M4 611L40 646.6M40 611L4 646.6" stroke="#b5123e" stroke-width="2.6" stroke-linecap="round"/><rect x="44.6" y="607.4" width="43.6" height="43" fill="#000"/><rect x="89" y="607.4" width="43.4" height="43" fill="#000"/><rect x="133.0" y="629" width="21.95" height="21.8" fill="#1b6af5"/><rect x="154.9" y="629" width="21.95" height="21.8" fill="#22aab8"/><rect x="176.9" y="629" width="21.95" height="21.8" fill="#210b5e"/><rect x="198.8" y="629" width="21.95" height="21.8" fill="#d95a4b"/><rect x="220.8" y="629" width="21.95" height="21.8" fill="#d0204a"/><rect x="242.8" y="629" width="21.95" height="21.8" fill="#eaf5fe"/><circle cx="165.8" cy="639.8" r="3.3" fill="#cdf3f7"/><circle cx="187.6" cy="639.8" r="5.9" fill="none" stroke="#c9a2f2" stroke-width="1.4"/><text x="15" y="664.5" font-size="9.5" fill="#e4e4e4" textLength="20.9" lengthAdjust="spacingAndGlyphs">フィル:</text><text x="0.8" y="678.1" font-size="9.5" fill="#e4e4e4" textLength="35.1" lengthAdjust="spacingAndGlyphs">ストローク:</text><rect x="51" y="652.6" width="34" height="12.8" fill="#22aab8"/><rect x="51" y="665.4" width="34" height="13" fill="#210b5e"/><rect x="132" y="652.6" width="47.4" height="26.4" rx="2.5" fill="#303030" stroke="#282828" stroke-width="1"/><path d="M157 666.2H165.4" stroke="#e9e9e9" stroke-width="1.4"/><path d="M168.6 666.2H177.0M172.79999999999998 662.0V670.4000000000001" stroke="#4d4d4d" stroke-width="1.5"/><rect x="186.3" y="658" width="1.8" height="15" fill="#4176c8"/><path d="M237.4 666.6Q242.2 660.8 247 666.6Q242.2 671.8 237.4 666.6Z" fill="none" stroke="#ececec" stroke-width="1.3"/><circle cx="242.2" cy="666.4" r="1.9" fill="#ececec"/><path d="M238.4 662.4L237.4 661M242.2 661.2V659.8M246 662.4L247 661" stroke="#ececec" stroke-width="1"/><rect x="262.4" y="665.4" width="7.6" height="5.8" rx="0.6" fill="#f0f0f0"/><path d="M266.6 665.4V663.4Q266.6 661 268.8 661Q271 661 271 663.4V664.2" fill="none" stroke="#f0f0f0" stroke-width="1.3"/><text x="284.6" y="670.4" font-size="9.5" fill="#f0f0f0" textLength="609.1" lengthAdjust="spacingAndGlyphs">2 個の パス オブジェクトが選択されています 2 個の親 (レイヤー Layer 1) に所属. 選択オブジェクトのクリックで拡大縮小ハンドル/回転ハンドルが切り替わります.</text><rect x="1129.4" y="652.6" width="60.4" height="29.4" rx="2.5" fill="#303030" stroke="#282828" stroke-width="1"/><rect x="1207.8" y="652.6" width="65.0" height="29.4" rx="2.5" fill="#303030" stroke="#282828" stroke-width="1"/><path d="M1168.6 666.4H1176.8" stroke="#e9e9e9" stroke-width="1.4"/><path d="M1180.2 666.4H1188.4M1184.3 662.3V670.5" stroke="#e9e9e9" stroke-width="1.5"/><path d="M1252.2 666.4H1260.4" stroke="#e9e9e9" stroke-width="1.4"/><path d="M1263.2 666.4H1271.4M1267.3 662.3V670.5" stroke="#e9e9e9" stroke-width="1.5"/><path d="M1259.6000000000001 619.5L1263.4 615.7L1267.2 619.5" fill="none" stroke="#6e6e6e" stroke-width="1.4" stroke-linecap="round" stroke-linejoin="round"/><path d="M1259.6000000000001 636.9L1263.4 640.6999999999999L1267.2 636.9" fill="none" stroke="#6e6e6e" stroke-width="1.4" stroke-linecap="round" stroke-linejoin="round"/><path d="M1268.6 637.8H1277M1268.6 641.5H1277M1268.6 645.2H1277" stroke="#f0f0f0" stroke-width="1.5"/></svg><span class="t" style="left:40px;top:656.6px;font-size:10.4px;color:#e6e6e6;letter-spacing:0px">m</span>
<span class="t" style="left:40px;top:670.6px;font-size:10.4px;color:#e6e6e6;letter-spacing:0px">m</span>
<span class="t" style="left:92px;top:670.6px;font-size:10.4px;color:#e6e6e6;letter-spacing:-0.4px">2.00</span>
<span class="t" style="left:118px;top:662.6px;font-size:10.4px;color:#e6e6e6;letter-spacing:0px">O:</span>
<span class="t" style="left:136px;top:662.7px;font-size:10.4px;color:#e6e6e6;letter-spacing:-0.3px">100</span>
<span class="t" style="left:192.2px;top:662.7px;font-size:10.4px;color:#e6e6e6;letter-spacing:-0.65px">Layer 1</span>
<span class="t" style="left:1065.3px;top:656.7px;font-size:10.4px;color:#e6e6e6;letter-spacing:0px">X:</span>
<span class="t" style="left:1082.4px;top:656.7px;font-size:10.4px;color:#e6e6e6;letter-spacing:-0.45px">250.82</span>
<span class="t" style="left:1065.3px;top:670.9px;font-size:10.4px;color:#e6e6e6;letter-spacing:0px">Y:</span>
<span class="t" style="left:1083.6px;top:670.9px;font-size:10.4px;color:#e6e6e6;letter-spacing:-0.45px">154.18</span>
<span class="t" style="left:1119.2px;top:663.3px;font-size:10.4px;color:#e6e6e6;letter-spacing:0px">Z:</span>
<span class="t" style="left:1140.2px;top:663.3px;font-size:10.4px;color:#e6e6e6;letter-spacing:-0.75px">93%</span>
<span class="t" style="left:1197.3px;top:663.3px;font-size:10.4px;color:#e6e6e6;letter-spacing:0px">R:</span>
<span class="t" style="left:1220.8px;top:663.3px;font-size:10.4px;color:#e6e6e6;letter-spacing:-0.45px">0.00°</span>
<svg class="ov" style="z-index:6" width="1280" height="720" viewBox="0 0 1280 720" ><path d="M1259.4 78H1264.6000000000001L1267.2 80.6V87.4H1259.4Z" fill="none" stroke="#f0f0f0" stroke-width="1.8" stroke-linejoin="round"/><circle cx="1270" cy="77.6" r="1.6" fill="#34a534"/><path d="M1258.4 101.4H1262.4L1263.6 102.8H1268.6V104.6H1258.4Z" fill="#f0f0f0"/><path d="M1258.4 110.4L1259.8 105.6H1270L1268.4 110.4Z" fill="#f0f0f0"/><rect x="1258.6" y="131.2" width="10.4" height="4.6" rx="0.8" fill="#f0f0f0"/><path d="M1263.8 124.6V130M1261 127.6L1263.8 130.4L1266.6 127.6" fill="none" stroke="#34a534" stroke-width="1.6"/><rect x="1258.4" y="153" width="10.8" height="5.4" rx="1" fill="#f0f0f0"/><rect x="1260.8" y="150" width="6" height="2.4" fill="#f0f0f0"/><rect x="1260.8" y="157" width="6" height="3.4" fill="#f0f0f0" stroke="#363636" stroke-width="0.7"/><path d="M1261 177.6H1266.0L1268.6 180.2V187.0H1261Z" fill="none" stroke="#f0f0f0" stroke-width="1.8" stroke-linejoin="round"/><path d="M1257 183H1263.4M1261.4 181L1263.6 183L1261.4 185" fill="none" stroke="#34a534" stroke-width="1.4"/><path d="M1259.2 202.4H1264.2L1266.8 205.0V211.8H1259.2Z" fill="none" stroke="#f0f0f0" stroke-width="1.8" stroke-linejoin="round"/><path d="M1264.6 208H1270M1268.2 206L1270.4 208L1268.2 210" fill="none" stroke="#34a534" stroke-width="1.4"/><path d="M1260.4 232.6H1265.4Q1268.4 232.6 1268.4 235.6Q1268.4 238.6 1265.4 238.6H1263.4" fill="none" stroke="#f0f0f0" stroke-width="1.6"/><path d="M1258.2 232.6L1261.8 229.8V235.4Z" fill="#f0f0f0"/><path d="M1267 256.8H1262.6Q1260 256.8 1260 259.4V262" fill="none" stroke="#6a6a6a" stroke-width="1.5"/><path d="M1269.2 256.8L1266 254.2V259.4Z" fill="#6a6a6a"/><rect x="1258.6" y="281" width="7.4" height="7.4" fill="#f0f0f0"/><rect x="1262.2" y="284.6" width="7.4" height="7.4" fill="#f0f0f0" stroke="#363636" stroke-width="1"/><path d="M1260.2 306L1266.6 314M1267.4 306L1261 314" stroke="#f0f0f0" stroke-width="1.5"/><circle cx="1260.4" cy="315.4" r="1.9" fill="none" stroke="#f0f0f0" stroke-width="1.3"/><circle cx="1267.2" cy="315.4" r="1.9" fill="none" stroke="#f0f0f0" stroke-width="1.3"/><rect x="1259" y="332.4" width="9.6" height="10.4" rx="1" fill="none" stroke="#bdbdbd" stroke-width="1.3"/><rect x="1261.6" y="334.6" width="6.4" height="7.4" fill="#f0f0f0"/><rect x="1262" y="331" width="3.6" height="2" fill="#f0f0f0"/><circle cx="1263.4" cy="363.6" r="5" fill="#f0f0f0"/><path d="M1266.8 367.2L1269 369.6" stroke="#f0f0f0" stroke-width="2.6" stroke-linecap="round"/><rect x="1261" y="361.4" width="4.4" height="3.2" fill="none" stroke="#555" stroke-width="0.8" stroke-dasharray="1 0.8"/><circle cx="1263.4" cy="387.6" r="5" fill="#f0f0f0"/><path d="M1266.8 391.2L1269 393.6" stroke="#f0f0f0" stroke-width="2.6" stroke-linecap="round"/><path d="M1260.6 389.4L1265.8 384.6" stroke="#444" stroke-width="1.2"/><circle cx="1263.2" cy="387" r="2.2" fill="none" stroke="#444" stroke-width="0.9"/><circle cx="1263.4" cy="411.6" r="5" fill="#f0f0f0"/><path d="M1266.8 415.2L1269 417.6" stroke="#f0f0f0" stroke-width="2.6" stroke-linecap="round"/><rect x="1261.6" y="408.4" width="3.2" height="5.2" fill="none" stroke="#444" stroke-width="0.9"/><rect x="1259.8" y="432.6" width="7.4" height="8" fill="none" stroke="#f0f0f0" stroke-width="1.3"/><path d="M1257.6 431.4L1259.4 432.8M1269.4 431.4L1267.6 432.8M1257.6 441.8L1259.4 440.4M1269.4 441.8L1267.6 440.4" stroke="#bdbdbd" stroke-width="1"/><rect x="1262" y="435.4" width="3" height="2.6" fill="#f0f0f0"/><rect x="1258.2" y="459.4" width="6.6" height="6.6" fill="#f0f0f0"/><rect x="1261.6" y="462.6" width="8" height="7.6" fill="#34a534"/><rect x="1258.2" y="483.6" width="6.6" height="6.6" fill="#f0f0f0"/><rect x="1261.8" y="487" width="7.6" height="7.6" fill="#363636" stroke="#f0f0f0" stroke-width="1.4"/><rect x="1264" y="490.4" width="3.4" height="3" fill="#f0f0f0"/><rect x="1258.2" y="508" width="6.6" height="6.6" fill="#f0f0f0"/><rect x="1261.8" y="511.4" width="7.6" height="7.6" fill="#363636" stroke="#f0f0f0" stroke-width="1.4"/><rect x="1263.8" y="515" width="3.6" height="2.6" fill="#f0f0f0"/><circle cx="1262.6" cy="540.6" r="2.7" fill="#f0f0f0"/><rect x="1263.6" y="541.6" width="3.6" height="3.4" fill="#f0f0f0"/><path d="M1258.2 538V536H1260.4M1267 536H1269.2V538M1258.2 545V547.2H1260.4M1267 547.2H1269.2V545" fill="none" stroke="#34a534" stroke-width="1.1"/><circle cx="1263.6" cy="565.4" r="3" fill="#f0f0f0"/><path d="M1258.6 560.4L1260.6 562.4M1268.8 560.4L1266.8 562.4M1258.6 570.6L1260.6 568.6M1268.8 570.6L1266.8 568.6" stroke="#f0f0f0" stroke-width="1.5"/><rect x="1253.4" y="580.6" width="20" height="20.6" rx="2.5" fill="#2f2f2f" stroke="#282828" stroke-width="1"/><path d="M1259.8 589.2L1263.4 592.8L1267 589.2" fill="none" stroke="#e8e8e8" stroke-width="1.5"/><text x="514.8" y="229" font-size="34" font-weight="900" textLength="161.5" lengthAdjust="spacingAndGlyphs" fill="#000" stroke="#000" stroke-width="9.2" stroke-linejoin="round" transform="translate(0.5 0.7)">尖っていた</text><text x="514.8" y="229" font-size="34" font-weight="900" textLength="161.5" lengthAdjust="spacingAndGlyphs" fill="#fbe085" stroke="#fbe085" stroke-width="0.7" stroke-linejoin="round">尖っていた</text><text x="515.5" y="278.5" font-size="34" font-weight="900" textLength="137" lengthAdjust="spacingAndGlyphs" fill="#000" stroke="#000" stroke-width="9.2" stroke-linejoin="round" transform="translate(0.5 0.7)">角が丸に</text><text x="515.5" y="278.5" font-size="34" font-weight="900" textLength="137" lengthAdjust="spacingAndGlyphs" fill="#fbe085" stroke="#fbe085" stroke-width="0.7" stroke-linejoin="round">角が丸に</text><text x="947.9" y="240" font-size="34" font-weight="900" textLength="155" lengthAdjust="spacingAndGlyphs" fill="#000" stroke="#000" stroke-width="9.2" stroke-linejoin="round" transform="translate(0.5 0.7)">角:丸結合</text><text x="947.9" y="240" font-size="34" font-weight="900" textLength="155" lengthAdjust="spacingAndGlyphs" fill="#fbe085" stroke="#fbe085" stroke-width="0.7" stroke-linejoin="round">角:丸結合</text><rect x="802" y="231.4" width="46.6" height="29.8" rx="3" fill="#0d0d0d" opacity="0.96"/><text x="811.2" y="252" font-size="9.5" fill="#dcdcdc" textLength="28.6" lengthAdjust="spacingAndGlyphs">丸結合</text><path d="M826.8 217.6V230.2L829.8 227.6L831.9 232.2L834 231.2L831.9 226.8H835.8Z" fill="#fff" stroke="#222" stroke-width="0.9" stroke-linejoin="round"/><g transform="translate(979.5 439.6) rotate(-12)"><text x="0.5" y="0" font-size="16" letter-spacing="3.8" fill="#f4f4f4">初期費用</text></g><path d="M977.6 441.7C981 445.6 985.5 447.4 990 446.3C998 444.4 1004 438.6 1011.6 435.6C1015 434.4 1017.4 434.6 1019.4 436.6C1020.8 438.4 1019.6 440.4 1017.8 439.4C1016.4 438.2 1017.6 435.8 1020.4 435C1027 433.2 1033 432.6 1039.4 431.2C1047 429.6 1054 428.4 1060.4 424.8C1065 421.6 1067 416 1068 410.4" fill="none" stroke="#f4f4f4" stroke-width="1" stroke-linecap="round"/><text x="1017.5" y="466" font-size="27" font-weight="700" textLength="54.5" lengthAdjust="spacingAndGlyphs" fill="#f4f4f4">ゼロ</text><text x="1082" y="465" font-size="17" textLength="32" lengthAdjust="spacingAndGlyphs" fill="#f4f4f4">から</text><text x="1032" y="488" font-size="16" letter-spacing="3" fill="#f4f4f4">はじめて</text><text x="1108.5" y="489" font-size="19" font-weight="700" textLength="112" lengthAdjust="spacingAndGlyphs" fill="#f4f4f4">クリエイター</text></svg><span class="t" style="z-index:7;left:1043.6px;top:497.4px;font-size:11.6px;color:#dadada;letter-spacing:-0.13px">zero kara hajimete creator</span>
</div>
</body></html>
